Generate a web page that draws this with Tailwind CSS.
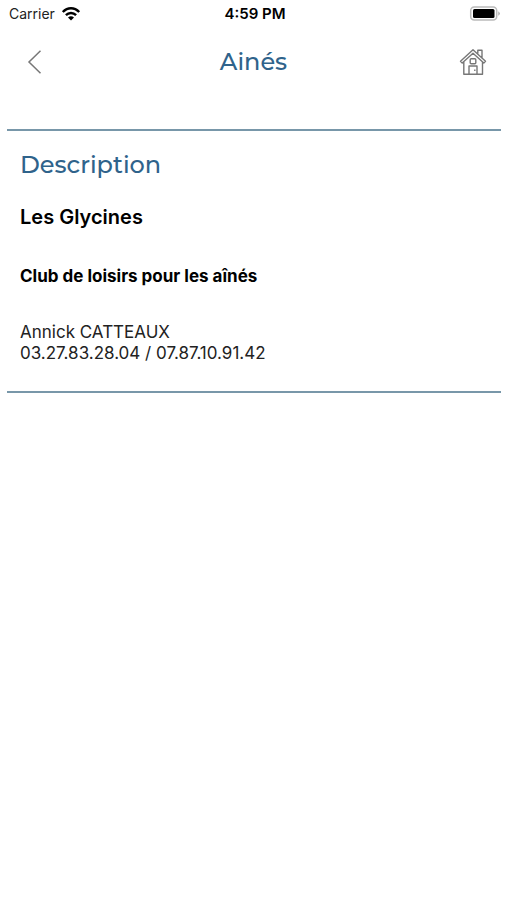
<!DOCTYPE html>
<html lang="fr">
<head>
<meta charset="utf-8">
<meta name="viewport" content="width=device-width, initial-scale=1">
<title>Ainés</title>
<script src="https://cdn.jsdelivr.net/npm/@tailwindcss/browser@4"></script>
</head>
<body class="min-h-screen bg-white font-['Inter',sans-serif] text-black">
<div class="grid h-7 grid-cols-3 items-center pr-[6px] pl-[9px] text-sm">
  <div class="flex items-center gap-[6px]"><span class="text-[#222]">Carrier</span>
    <svg class="h-4 w-5" viewBox="0 0 20 16" fill="none" stroke="#000" stroke-width="2.4" aria-hidden="true"><path d="M1.800 6C6.600 1 13.400 1 18.200 6M4.900 9.200C7.800 6.200 12.200 6.200 15.100 9.200"/><path d="M10 14.500L7 11.500Q10 9 13 11.500Z" fill="#000" stroke="none"/></svg>
  </div>
  <div class="text-center text-[15px] font-semibold">4:59 PM</div>
  <div class="flex justify-end">
    <svg class="h-4 w-8" viewBox="0 0 32 16" aria-hidden="true"><rect x="1.700" y="1" width="26" height="13" rx="3.500" fill="#fff" stroke="#bbb" stroke-width="1.500"/><rect x="4" y="3" width="21.500" height="9" rx="1.500"/><path d="M29.300 5.200q3 2.300 0 4.600z" fill="#aaa"/></svg>
  </div>
</div>
<header class="grid h-17 grid-cols-3 items-center px-5">
  <button type="button" aria-label="Retour" class="flex size-7 items-center justify-center"><svg class="h-6 w-4" viewBox="0 0 16 24" fill="none" stroke="#777" stroke-width="1.500"><path d="M14.500 .8L3 12L14.500 23.200"/></svg></button>
  <h1 class="text-center font-['Montserrat','Inter',sans-serif] text-2xl font-medium text-[#2f638b]">Ainés</h1>
  <a href="#" aria-label="Accueil" class="size-7 justify-self-end"><svg class="size-7" viewBox="0 0 28 28" fill="none" stroke="#777" stroke-width="1.400" stroke-linejoin="round"><path d="M1.500 13.200L14 1.700L26.500 13.200L24.800 15L14 5.200L3.200 15ZM4.800 14V26.200H23.500V14M18.800 5.600V2.200H23V9.700M10 26V18H18V26"/><rect x="11.200" y="10.800" width="5.600" height="5" rx="1"/><path d="M15.800 21.500V23"/></svg></a>
</header>
<main class="mr-[6px] ml-[7px] mt-[33px] border-y-2 border-[#7897a9] px-[13px]">
  <h2 class="mt-[18px] font-['Montserrat','Inter',sans-serif] text-2xl font-medium text-[#2f638b]">Description</h2>
  <h3 class="mt-[22px] text-xl font-semibold">Les Glycines</h3>
  <h4 class="mt-[33px] text-[17px] font-bold">Club de loisirs pour les aînés</h4>
  <p class="mt-8 mb-[27px] text-[17px] leading-[21px] text-[#222]">Annick CATTEAUX<br>03.27.83.28.04 / 07.87.10.91.42</p>
</main>
</body>
</html>
